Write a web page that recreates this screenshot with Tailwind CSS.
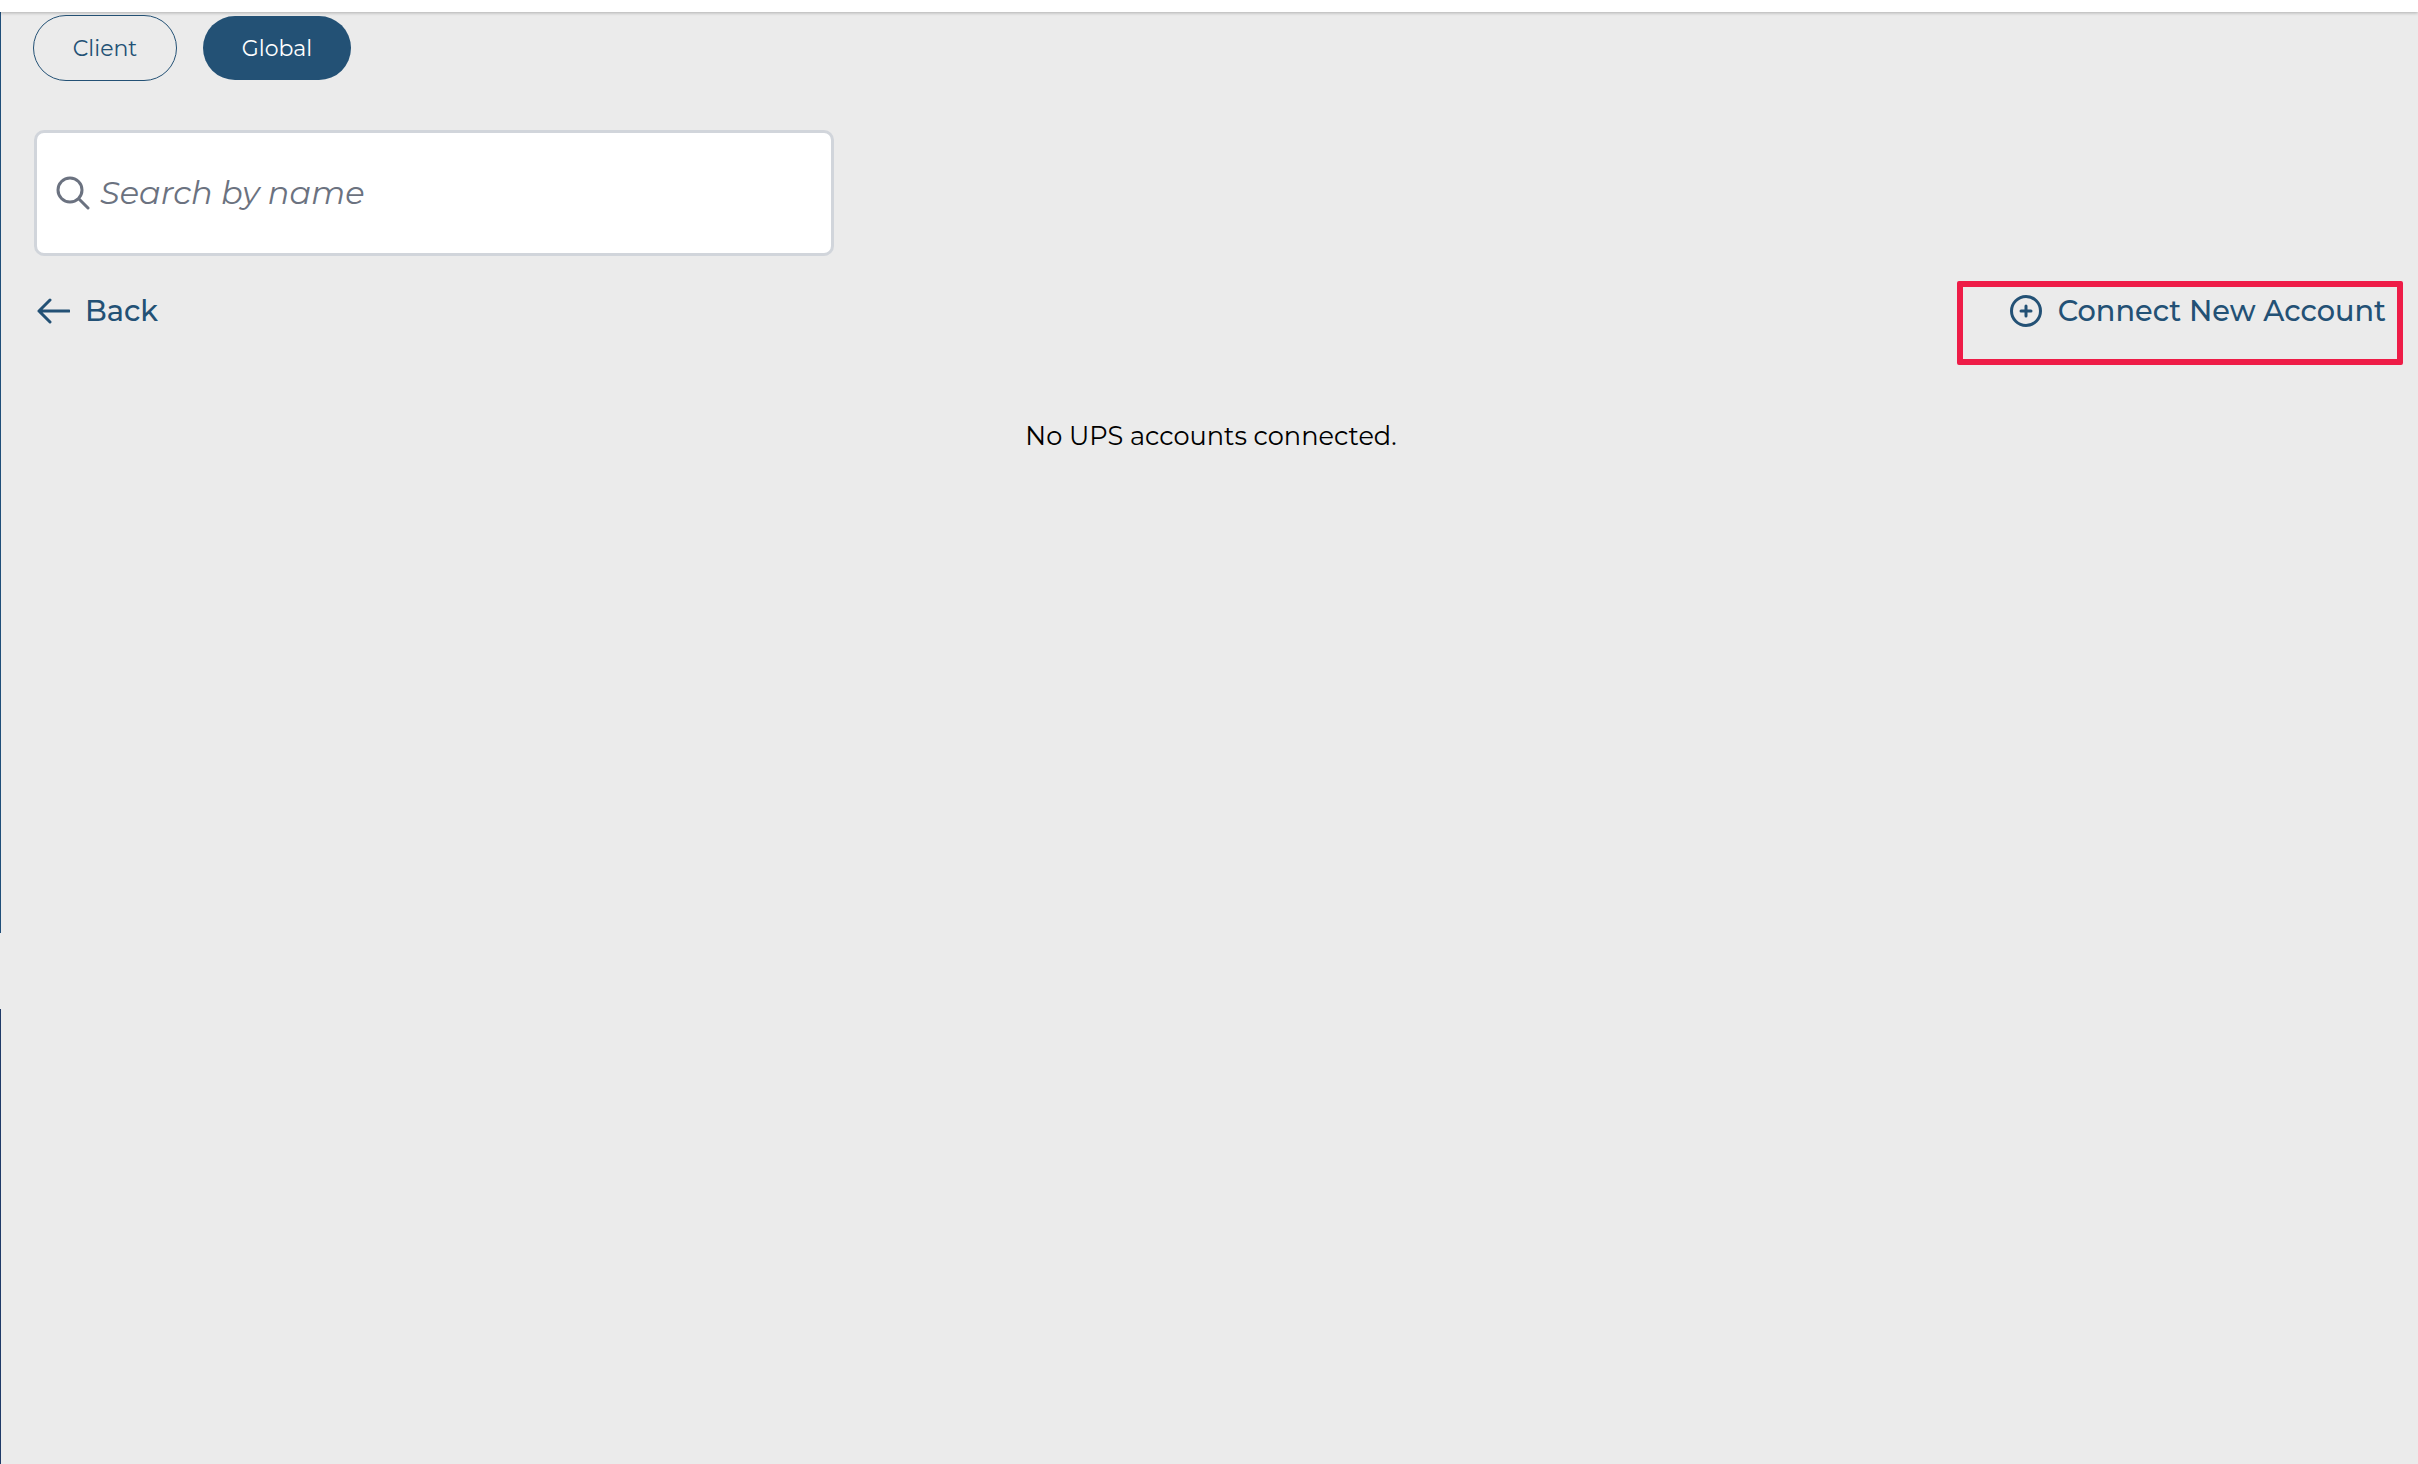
<!DOCTYPE html>
<html><head><script src="https://cdn.jsdelivr.net/npm/@tailwindcss/browser@4"></script></head>
<body class="bg-[#ebebeb] font-['Montserrat','Inter','Noto_Sans',sans-serif]">
<div class="w-[2418px] h-[1464px] overflow-hidden relative bg-[#ebebeb]">
<div class="h-[12px] bg-white shadow-[0_1px_3px_rgba(0,0,0,0.25)] relative z-10"></div>
<div class="absolute left-0 top-[12px] h-[921px] w-[1px] bg-[#1f4e79]"></div>
<div class="absolute left-0 top-[1009px] bottom-0 w-[1px] bg-[#1f3a68]"></div>
<div class="pt-[3px] pl-[33px] pr-[32px]">
<div class="flex gap-[26px] items-center">
<div class="w-[144px] h-[66px] rounded-full border border-[#235175] flex items-center justify-center text-[#235175] text-[22px]">Client</div>
<div class="w-[148px] h-[64px] rounded-full bg-[#235175] flex items-center justify-center text-white text-[22px]">Global</div>
</div>
<div class="mt-[49px] ml-[1px] w-[800px] h-[126px] bg-white rounded-[10px] border-[3px] border-[#d1d5db] flex items-center pl-[19px] gap-[10px]">
<svg width="34" height="34" viewBox="0 0 34 34" fill="none" stroke="#6b7280" stroke-width="3" stroke-linecap="round"><circle cx="14" cy="14" r="12"/><path d="M23 23l9 9"/></svg>
<span class="text-[32px] italic text-[#6b7280]">Search by name</span>
</div>
<div class="mt-[33px] h-[70px] flex justify-between items-start text-[#235175] text-[28.8px] font-medium">
<div class="flex items-center gap-[15px] ml-[4px]"><svg width="33" height="26" viewBox="0 0 33 26" fill="none" stroke="#235175" stroke-width="3" stroke-linecap="round" stroke-linejoin="round"><path d="M32 13H2M13 2L2 13l11 11"/></svg>Back</div>
<div class="flex items-center gap-[16px]"><svg width="32" height="32" viewBox="0 0 32 32" fill="none" stroke="#235175" stroke-width="3" stroke-linecap="round"><circle cx="16" cy="16" r="14.5"/><path d="M16 11v10M11 16h10"/></svg>Connect New Account</div>
</div>
<div class="mt-[58px] pl-[3px] text-center text-black text-[25.6px]">No UPS accounts connected.</div>
</div>
<div class="absolute left-[1957px] top-[281px] w-[446px] h-[84px] border-[6px] border-[#ee1c47] rounded-[2px]"></div>
</div>
</body></html>
